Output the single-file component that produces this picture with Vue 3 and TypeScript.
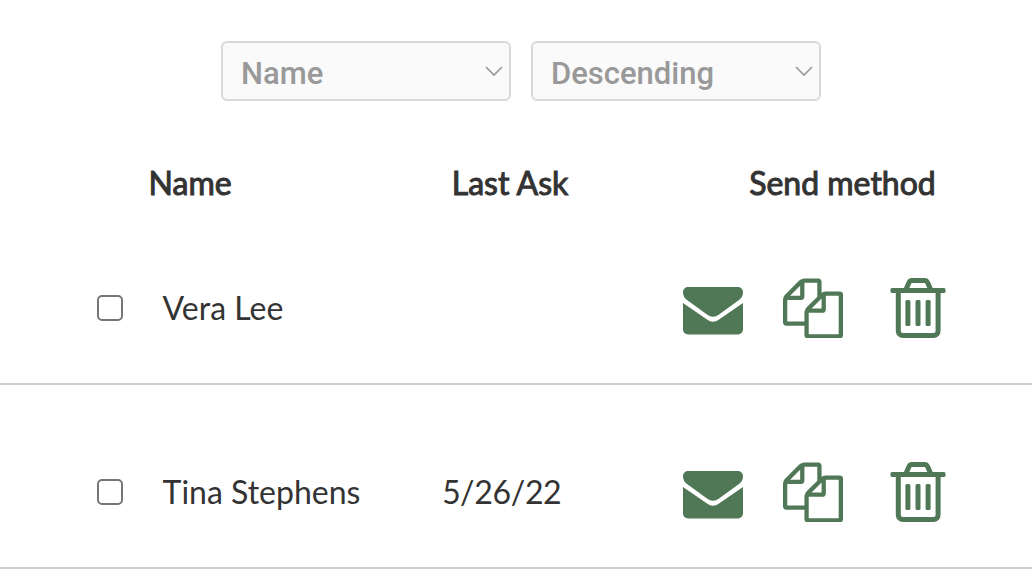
<script setup lang="ts">
import { ref } from 'vue'

interface Contact {
  id: number
  name: string
  lastAsk: string
}

const sortBy = ref('Name')
const order = ref('Descending')
const selected = ref<number[]>([])
const contacts = ref<Contact[]>([
  { id: 1, name: 'Vera Lee', lastAsk: '' },
  { id: 2, name: 'Tina Stephens', lastAsk: '5/26/22' },
])

function remove(id: number) {
  contacts.value = contacts.value.filter((c) => c.id !== id)
}
</script>

<template>
  <main class="page">
    <div class="filters">
      <div class="picker">
        <select v-model="sortBy" aria-label="Sort by">
          <option>Name</option>
          <option>Last Ask</option>
        </select>
        <svg class="chevron" viewBox="0 0 18 10" aria-hidden="true"><path d="M1 1l8 8 8-8" /></svg>
      </div>
      <div class="picker">
        <select v-model="order" aria-label="Sort order">
          <option>Descending</option>
          <option>Ascending</option>
        </select>
        <svg class="chevron" viewBox="0 0 18 10" aria-hidden="true"><path d="M1 1l8 8 8-8" /></svg>
      </div>
    </div>

    <table class="contacts">
      <colgroup>
        <col class="col-check" />
        <col class="col-name" />
        <col class="col-date" />
        <col />
      </colgroup>
      <thead>
        <tr>
          <td></td>
          <th scope="col">Name</th>
          <th scope="col" class="head-date">Last Ask</th>
          <th scope="col" class="head-send">Send method</th>
        </tr>
      </thead>
      <tbody>
        <tr v-for="c in contacts" :key="c.id">
          <td class="check">
            <input :id="`contact-${c.id}`" v-model="selected" type="checkbox" :value="c.id" />
          </td>
          <td class="name"><label :for="`contact-${c.id}`">{{ c.name }}</label></td>
          <td class="date">{{ c.lastAsk }}</td>
          <td>
            <div class="actions">
              <button type="button" :aria-label="`Email ${c.name}`">
                <svg width="60" height="60" viewBox="0 0 60 60" aria-hidden="true">
                  <path d="M5 9h50a5 5 0 0 1 5 5c0 3-1 6-4 8L36 36.500q-6 4.500-12 0L4 22c-3-2-4-5-4-8a5 5 0 0 1 5-5z" />
                  <path d="M0 25L24 41.500q6 4.500 12 0L60 25V51.500a5 5 0 0 1-5 5H5a5 5 0 0 1-5-5z" />
                </svg>
              </button>
              <button type="button" :aria-label="`Copy message for ${c.name}`">
                <svg width="60" height="60" viewBox="0 -16 1792 1792" aria-hidden="true">
                  <path d="M1696 384q40 0 68 28t28 68v1216q0 40-28 68t-68 28h-960q-40 0-68-28t-28-68v-288h-544q-40 0-68-28t-28-68v-672q0-40 20-88t48-76l408-408q28-28 76-48t88-20h416q40 0 68 28t28 68v328q68-40 128-40h416zm-544 213l-299 299h299v-299zm-640-384l-299 299h299v-299zm196 647l316-316v-416h-384v416q0 40-28 68t-68 28h-416v640h512v-256q0-40 20-88t48-76zm956 804v-1152h-384v416q0 40-28 68t-68 28h-416v640h896z" />
                </svg>
              </button>
              <button type="button" class="trash" :aria-label="`Delete ${c.name}`" @click="remove(c.id)">
                <svg width="56" height="60" viewBox="0 0 56 60" aria-hidden="true">
                  <rect x="0.500" y="10" width="55" height="5" rx="1.500" />
                  <path class="line" d="M8.300 13v40a4.500 4.500 0 0 0 4.500 4.500h30.800a4.500 4.500 0 0 0 4.500-4.500V13" />
                  <path class="line" d="M15.800 12l3.200-7.500q1-2 3-2h12.600q2 0 3 2l3.200 7.500" />
                  <rect x="15.400" y="22" width="5" height="26" rx="1.500" />
                  <rect x="25.500" y="22" width="5" height="26" rx="1.500" />
                  <rect x="35.600" y="22" width="5" height="26" rx="1.500" />
                </svg>
              </button>
            </div>
          </td>
        </tr>
      </tbody>
    </table>
  </main>
</template>

<style>
body {
  margin: 0;
  background: #fff;
}
</style>

<style scoped>
.page {
  padding-top: 41px;
  color: #333;
  font-family: Lato, "Liberation Sans", sans-serif;
  font-size: 32px;
  line-height: 40px;
}

.filters {
  display: flex;
  justify-content: center;
  gap: 20px;
  padding-left: 10px;
}

.picker {
  position: relative;
  width: 290px;
}

select {
  display: block;
  appearance: none;
  box-sizing: border-box;
  width: 100%;
  height: 60px;
  margin: 0;
  padding: 4px 40px 0 18px;
  border: 2px solid #d9d9d9;
  border-radius: 6px;
  background: #fafafa;
  color: #999;
  font-family: Roboto, "Liberation Sans", sans-serif;
  font-size: 31px;
  font-weight: 500;
}

.chevron {
  position: absolute;
  top: 25px;
  right: 8px;
  width: 18px;
  height: 10px;
  fill: none;
  stroke: #999;
  stroke-width: 1.7;
  pointer-events: none;
}

.contacts {
  width: 100%;
  table-layout: fixed;
  border-collapse: separate;
  border-spacing: 0;
}

.col-check {
  width: 14.4%;
}

.col-name {
  width: 28.5%;
}

.col-date {
  width: 23.3%;
}

th,
td {
  padding: 0;
  text-align: left;
  vertical-align: middle;
}

th {
  padding: 64px 0 0;
  height: 36px;
  line-height: 36px;
  vertical-align: top;
  font-weight: 400;
  -webkit-text-stroke: 1px currentColor;
}

.head-date {
  padding-left: 9px;
}

.head-send {
  padding-left: 66px;
}

tbody td {
  padding-top: 77px;
  padding-bottom: 45px;
  border-bottom: 2px solid #ccc;
}

tbody .check {
  padding-left: 97px;
}

tbody .name {
  padding-left: 14px;
}

.date {
  font-variant-numeric: proportional-nums;
}

input {
  display: block;
  appearance: none;
  box-sizing: border-box;
  width: 26px;
  height: 26px;
  margin: 0;
  border: 2px solid #767676;
  border-radius: 5px;
  background: #fff;
}

input:checked {
  background: #517856;
}

.actions {
  display: flex;
  gap: 40px;
}

button {
  display: flex;
  justify-content: center;
  width: 60px;
  padding: 0;
  border: 0;
  background: none;
  color: #517856;
  cursor: pointer;
}

.trash {
  width: 70px;
}

button svg {
  display: block;
  fill: currentColor;
}

.line {
  fill: none;
  stroke: currentColor;
  stroke-width: 5;
}
</style>
